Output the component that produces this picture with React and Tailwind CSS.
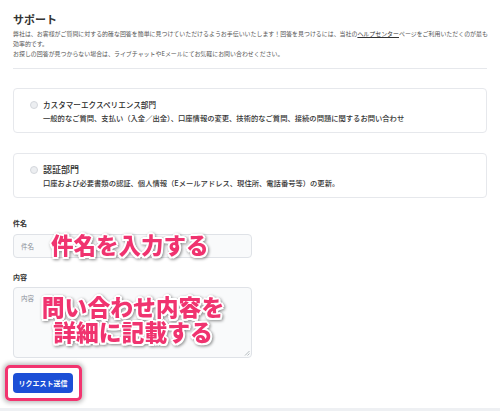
import React from "react";

const jp = { fontFamily: '"Noto Sans CJK JP", "Noto Sans", sans-serif' };

function Card({ title, sub, titleClass }) {
  return (
    <div className="rounded-[4px] border border-[#e6e8ec] bg-white pl-[16px] pt-[9px] pb-[9px] h-[45px]">
      <div className="flex items-center h-[13px]">
        <span className="w-[8px] h-[8px] rounded-full border border-[#d4d7dc] bg-[#eceef1] shrink-0"></span>
        <span className={"ml-[5px] font-medium text-[#2b2b2b] leading-[13px] " + titleClass}>{title}</span>
      </div>
      <div className="ml-[13px] mt-[2px] text-[7.3px] leading-[10px] font-medium text-[#333] whitespace-nowrap">{sub}</div>
    </div>
  );
}

const overlay =
  "absolute font-black text-[#f0336f] whitespace-nowrap [text-shadow:2px_0_0_#fff,-2px_0_0_#fff,0_2px_0_#fff,0_-2px_0_#fff,1.5px_1.5px_0_#fff,-1.5px_-1.5px_0_#fff,1.5px_-1.5px_0_#fff,-1.5px_1.5px_0_#fff] [filter:drop-shadow(1px_1px_1.5px_rgba(0,0,0,0.45))]";

export default function App() {
  return (
    <div className="relative w-[500px] h-[411px] overflow-hidden bg-white" style={jp}>
      <div className="px-[13px] pt-[12px]">
        <h2 className="text-[11px] leading-[14px] font-bold text-[#333]">サポート</h2>
        <div className="mt-[3px] text-[5.95px] leading-[10px] text-[#555] whitespace-nowrap">
          <div>
            弊社は、お客様がご質問に対する的確な回答を簡単に見つけていただけるようお手伝いいたします！回答を見つけるには、当社の
            <span className="underline text-[#333]">ヘルプセンター</span>ページをご利用いただくのが最も
          </div>
          <div>効率的です。</div>
          <div>お探しの回答が見つからない場合は、ライブチャットやEメールにてお気軽にお問い合わせください。</div>
        </div>
        <div className="mt-[9px] border-t border-[#e6e8ec]"></div>

        <div className="mt-[19px]">
          <Card
            title="カスタマーエクスペリエンス部門"
            titleClass="text-[7.6px]"
            sub="一般的なご質問、支払い（入金／出金）、口座情報の変更、技術的なご質問、接続の問題に関するお問い合わせ"
          />
        </div>
        <div className="mt-[20px]">
          <Card
            title="認証部門"
            titleClass="text-[9px]"
            sub="口座および必要書類の認証、個人情報（Eメールアドレス、現住所、電話番号等）の更新。"
          />
        </div>

        <div className="mt-[20px] text-[7px] leading-[10px] font-bold text-[#333]">件名</div>
        <div className="mt-[6px] w-[239px] h-[24px] rounded-[4px] border border-[#dfe2e7] bg-[#f9fafb] flex items-center pl-[7px]">
          <span className="text-[6.5px] leading-[8px] text-[#8a8f98]">件名</span>
        </div>

        <div className="mt-[14px] text-[7px] leading-[10px] font-bold text-[#333]">内容</div>
        <div className="relative mt-[5px] w-[239px] h-[71px] rounded-[4px] border border-[#dfe2e7] bg-[#f9fafb] pl-[7px] pt-[6px]">
          <div className="text-[6.5px] leading-[8px] text-[#8a8f98]">内容</div>
          <svg className="absolute right-[1px] bottom-[1px]" width="6" height="6" viewBox="0 0 6 6">
            <path d="M5.5 1 L1 5.5 M5.5 3.5 L3.5 5.5" stroke="#9aa0a8" strokeWidth="0.7" />
          </svg>
        </div>

        <div className="relative mt-[15px] w-[60px]">
          <div className="absolute left-[-8px] top-[-8px] w-[77px] h-[36px] rounded-[5px] border-[3px] border-[#f2346f] shadow-[0_0_4px_2px_rgba(0,0,0,0.25)]"></div>
          <button className="relative w-[60px] h-[20px] rounded-[4px] bg-[#1c4fd6] text-white text-[7px] font-bold flex items-center justify-center">
            リクエスト送信
          </button>
        </div>
      </div>

      <div className="absolute left-0 right-0 bottom-0 h-[3px] bg-[#eef0f3]"></div>

      <div className={overlay + " left-[51px] top-[229px] text-[22.5px] leading-[30px]"}>件名を入力する</div>
      <div className={overlay + " left-[41px] top-[294px] w-[184px] text-center text-[22.8px] leading-[25px]"}>
        問い合わせ内容を
        <br />
        詳細に記載する
      </div>
    </div>
  );
}
